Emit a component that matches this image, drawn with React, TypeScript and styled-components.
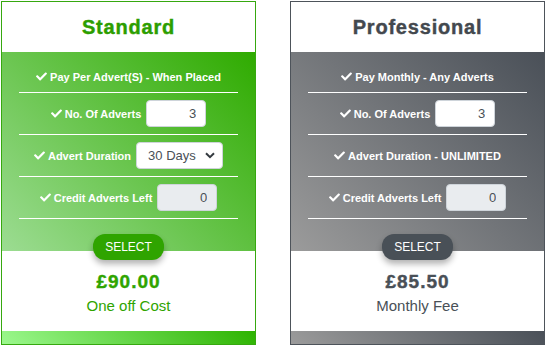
import React from "react";
import styled, { createGlobalStyle } from "styled-components";
import { FaCheck } from "react-icons/fa";

type Tone = "green" | "gray";

const palette: Record<Tone, { main: string; title: string; border: string; body: string; band: string }> = {
  green: {
    main: "#2fa400",
    title: "#2c9e00",
    border: "#36a80f",
    body: "linear-gradient(45deg, #9cdc92 0%, #2fab00 100%)",
    band: "linear-gradient(45deg, #9cf88e 0%, #2db300 100%)",
  },
  gray: {
    main: "#495057",
    title: "#43484e",
    border: "#4d535a",
    body: "linear-gradient(45deg, #9b9b9b 0%, #4a5058 100%)",
    band: "linear-gradient(45deg, #9b9b9b 0%, #4a5058 100%)",
  },
};

const GlobalStyle = createGlobalStyle`
  html, body { margin: 0; padding: 0; background: #fff; }
  body { font-family: "Liberation Sans", Arial, sans-serif; }
`;

const Page = styled.div`
  display: flex;
  align-items: flex-start;
  gap: 34px;
  padding: 1px;
`;

const Card = styled.div<{ $tone: Tone }>`
  width: 255px;
  box-sizing: border-box;
  border: 1px solid ${(p) => palette[p.$tone].border};
  display: flex;
  flex-direction: column;
  background: #fff;
`;

const Header = styled.div<{ $tone: Tone }>`
  height: 50px;
  display: flex;
  align-items: center;
  justify-content: center;
  font-size: 20px;
  font-weight: 700;
  letter-spacing: 0.8px;
  -webkit-text-stroke: 0.4px currentColor;
  color: ${(p) => palette[p.$tone].title};
`;

const Body = styled.div<{ $tone: Tone }>`
  background: ${(p) => palette[p.$tone].body};
  padding: 9px 17px 0;
  display: flex;
  flex-direction: column;
  align-items: center;
`;

const Row = styled.div<{ $first?: boolean }>`
  align-self: stretch;
  box-sizing: content-box;
  min-height: ${(p) => (p.$first ? 31 : 41)}px;
  border-bottom: 1px solid #fff;
  display: flex;
  align-items: center;
  justify-content: center;
  gap: 5px;
  color: #fff;
  font-size: 11px;
  font-weight: 700;
`;

const Label = styled.span`
  display: inline-flex;
  align-items: center;
  gap: 3px;
  white-space: nowrap;
`;

const NumberInput = styled.input<{ $disabled?: boolean }>`
  width: 60px;
  height: 27px;
  box-sizing: border-box;
  border: 1px solid #ced4da;
  border-radius: 4px;
  padding: 0 9px;
  text-align: right;
  font-family: "Liberation Sans", Arial, sans-serif;
  font-size: 13px;
  color: #495057;
  background: ${(p) => (p.$disabled ? "#e9ecef" : "#fff")};
  outline: none;
`;

const SelectBox = styled.div`
  width: 87px;
  height: 27px;
  box-sizing: border-box;
  display: flex;
  align-items: center;
  border: 1px solid #ced4da;
  border-radius: 4px;
  background: #fff;
  padding: 0 7px 0 11px;
`;

const NativeSelect = styled.select`
  appearance: none;
  -webkit-appearance: none;
  border: none;
  background: transparent;
  flex: 1;
  min-width: 0;
  padding: 0;
  font-family: "Liberation Sans", Arial, sans-serif;
  font-size: 13px;
  color: #495057;
  outline: none;
`;

const SelectButton = styled.button<{ $tone: Tone }>`
  position: relative;
  z-index: 1;
  margin-top: 15px;
  margin-bottom: -9px;
  width: 71px;
  height: 26px;
  border: none;
  border-radius: 12px;
  background: ${(p) => palette[p.$tone].main};
  color: #fff;
  font-family: "Liberation Sans", Arial, sans-serif;
  font-size: 12px;
  padding: 0;
  box-shadow: 0 4px 6px rgba(0, 0, 0, 0.3);
  cursor: pointer;
`;

const PriceArea = styled.div<{ $tone: Tone }>`
  height: 80px;
  box-sizing: border-box;
  padding-top: 20px;
  display: flex;
  flex-direction: column;
  align-items: center;
  background: #fff;
  color: ${(p) => palette[p.$tone].main};
`;

const Price = styled.div`
  font-size: 19px;
  line-height: 22px;
  font-weight: 700;
  letter-spacing: 1px;
  -webkit-text-stroke: 0.4px currentColor;
`;

const Caption = styled.div`
  margin-top: 4px;
  font-size: 15px;
  line-height: 18px;
`;

const Band = styled.div<{ $tone: Tone }>`
  height: 13px;
  background: ${(p) => palette[p.$tone].band};
`;

const Check = () => <FaCheck size={11} color="#fff" />;

const Chevron = () => (
  <svg width="10" height="7" viewBox="0 0 10 7">
    <path d="M1 1.2 L5 5.2 L9 1.2" fill="none" stroke="#343a40" strokeWidth="2" />
  </svg>
);

const CheckLabel: React.FC<{ children: React.ReactNode }> = ({ children }) => (
  <Label>
    <Check />
    {children}
  </Label>
);

export default function App() {
  return (
    <>
      <GlobalStyle />
      <Page>
        <Card $tone="green">
          <Header $tone="green">Standard</Header>
          <Body $tone="green">
            <Row $first>
              <CheckLabel>Pay Per Advert(S) - When Placed</CheckLabel>
            </Row>
            <Row>
              <CheckLabel>No. Of Adverts</CheckLabel>
              <NumberInput type="text" defaultValue="3" />
            </Row>
            <Row>
              <CheckLabel>Advert Duration</CheckLabel>
              <SelectBox>
                <NativeSelect defaultValue="30">
                  <option value="30">30 Days</option>
                  <option value="60">60 Days</option>
                  <option value="90">90 Days</option>
                </NativeSelect>
                <Chevron />
              </SelectBox>
            </Row>
            <Row>
              <CheckLabel>Credit Adverts Left</CheckLabel>
              <NumberInput type="text" defaultValue="0" disabled $disabled />
            </Row>
            <SelectButton $tone="green">SELECT</SelectButton>
          </Body>
          <PriceArea $tone="green">
            <Price>£90.00</Price>
            <Caption>One off Cost</Caption>
          </PriceArea>
          <Band $tone="green" />
        </Card>

        <Card $tone="gray">
          <Header $tone="gray">Professional</Header>
          <Body $tone="gray">
            <Row $first>
              <CheckLabel>Pay Monthly - Any Adverts</CheckLabel>
            </Row>
            <Row>
              <CheckLabel>No. Of Adverts</CheckLabel>
              <NumberInput type="text" defaultValue="3" />
            </Row>
            <Row>
              <CheckLabel>Advert Duration - UNLIMITED</CheckLabel>
            </Row>
            <Row>
              <CheckLabel>Credit Adverts Left</CheckLabel>
              <NumberInput type="text" defaultValue="0" disabled $disabled />
            </Row>
            <SelectButton $tone="gray">SELECT</SelectButton>
          </Body>
          <PriceArea $tone="gray">
            <Price>£85.50</Price>
            <Caption>Monthly Fee</Caption>
          </PriceArea>
          <Band $tone="gray" />
        </Card>
      </Page>
    </>
  );
}
